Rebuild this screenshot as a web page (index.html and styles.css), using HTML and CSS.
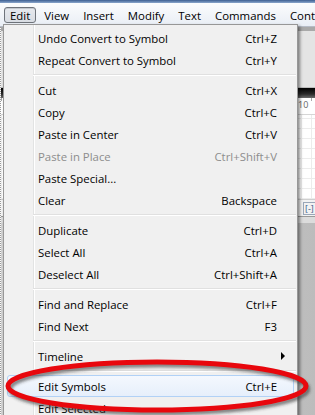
FILE: index.html
```html
<!DOCTYPE html>
<html lang="en">
<head>
  <meta charset="UTF-8">
  <title>Edit Menu</title>
  <link rel="stylesheet" href="styles.css">
</head>
<body>
  <div class="app">
    <div class="titlebar"></div>
    <nav class="menubar">
      <span class="menu-title active">Edit</span>
      <span class="menu-title">View</span>
      <span class="menu-title">Insert</span>
      <span class="menu-title">Modify</span>
      <span class="menu-title">Text</span>
      <span class="menu-title">Commands</span>
      <span class="menu-title">Cont</span>
    </nav>

    <div class="workspace">
      <div class="left-strip"></div>
      <div class="main">
        <div class="toolbar"></div>
        <div class="panel"></div>
        <div class="timeline-bar"></div>
        <div class="ruler"><span class="ruler-num">10</span></div>
        <div class="stage"></div>
        <div class="stage-footer"><span class="zoom-box">[-]</span></div>
        <div class="gray-area"></div>
      </div>
    </div>

    <ul class="dropdown">
      <li class="item"><span>Undo Convert to Symbol</span><span class="key">Ctrl+Z</span></li>
      <li class="item"><span>Repeat Convert to Symbol</span><span class="key">Ctrl+Y</span></li>
      <li class="sep"></li>
      <li class="item"><span>Cut</span><span class="key">Ctrl+X</span></li>
      <li class="item"><span>Copy</span><span class="key">Ctrl+C</span></li>
      <li class="item"><span>Paste in Center</span><span class="key">Ctrl+V</span></li>
      <li class="item disabled"><span>Paste in Place</span><span class="key">Ctrl+Shift+V</span></li>
      <li class="item"><span>Paste Special...</span><span class="key"></span></li>
      <li class="item"><span>Clear</span><span class="key">Backspace</span></li>
      <li class="sep"></li>
      <li class="item"><span>Duplicate</span><span class="key">Ctrl+D</span></li>
      <li class="item"><span>Select All</span><span class="key">Ctrl+A</span></li>
      <li class="item"><span>Deselect All</span><span class="key">Ctrl+Shift+A</span></li>
      <li class="sep"></li>
      <li class="item"><span>Find and Replace</span><span class="key">Ctrl+F</span></li>
      <li class="item"><span>Find Next</span><span class="key">F3</span></li>
      <li class="sep"></li>
      <li class="item"><span>Timeline</span><span class="arrow"></span></li>
      <li class="sep"></li>
      <li class="item hover"><span>Edit Symbols</span><span class="key">Ctrl+E</span></li>
      <li class="item"><span>Edit Selected</span><span class="key"></span></li>
    </ul>

    <svg class="annotation" width="315" height="415" viewBox="0 0 315 415">
      <defs>
        <filter id="soft" x="-10%" y="-50%" width="120%" height="200%">
          <feGaussianBlur stdDeviation="1.8"/>
        </filter>
      </defs>
      <ellipse cx="159" cy="389" rx="149" ry="24" fill="none" stroke="rgba(50,50,50,0.6)" stroke-width="4.5" filter="url(#soft)"/>
      <ellipse cx="157" cy="386" rx="149" ry="24" fill="none" stroke="#e8070d" stroke-width="5"/>
    </svg>
  </div>
</body>
</html>
```

FILE: styles.css
```css
body {
  margin: 0;
  padding: 0;
  font-family: 'Open Sans', 'Liberation Sans', sans-serif;
  font-size: 11.4px;
  color: #000;
}

.app {
  position: relative;
  width: 315px;
  height: 415px;
  overflow: hidden;
  background: #c9c9c9;
}

.titlebar {
  height: 3px;
  background: linear-gradient(#3d5f91, #8aa6cc);
}

.menubar {
  height: 23px;
  display: flex;
  align-items: center;
  gap: 2px;
  padding-left: 4px;
  overflow: hidden;
  background: linear-gradient(#fbfcfd, #e9eef5);
  border-bottom: 1px solid #b6bcc6;
  white-space: nowrap;
}

.menu-title {
  padding: 0 5px;
  height: 16px;
  line-height: 15px;
  border: 1px solid transparent;
  border-radius: 3px;
  box-sizing: border-box;
}

.menu-title.active {
  border-color: #6f747b;
  background: linear-gradient(#e6e9ee, #d9dde3);
  box-shadow: inset 0 1px 0 #c4c8ce;
}

.workspace {
  display: flex;
  height: 391px;
}

.left-strip {
  width: 3px;
  background: #fbfbfb;
  border-right: 1px dotted #9a9a9a;
  box-sizing: border-box;
}

.main {
  flex: 1;
  display: flex;
  flex-direction: column;
}

.toolbar {
  height: 4px;
  background: #a9a9a9;
}

.panel {
  height: 57px;
  background: #e4e4e4;
  border-bottom: 1px solid #bdbdbd;
  box-sizing: border-box;
}

.timeline-bar {
  height: 10px;
  background: linear-gradient(#000, #2a2a2a 60%, #6a6a6a);
}

.ruler {
  height: 17px;
  background: #fff;
  border-bottom: 1px solid #d6d6d6;
  box-sizing: border-box;
  padding-left: 297px;
  font-size: 9px;
  color: #666;
  line-height: 14px;
  background-image: repeating-linear-gradient(90deg, #aaa 0 1px, transparent 1px 5px);
  background-size: 100% 3px;
  background-repeat: no-repeat;
}

.ruler-num {
  background: #fff;
}

.stage {
  height: 84px;
  background-color: #fff;
  background-image:
    repeating-linear-gradient(90deg, #ececec 0 1px, transparent 1px 10px),
    repeating-linear-gradient(0deg, #ececec 0 1px, transparent 1px 10px);
}

.stage-footer {
  height: 18px;
  background: #f2f2f2;
  border-top: 1px solid #cfcfcf;
  border-bottom: 1px solid #9a9a9a;
  box-sizing: border-box;
  padding-left: 302px;
  display: flex;
  align-items: center;
}

.zoom-box {
  font-size: 9px;
  color: #3a5a8a;
  border: 1px solid #9aa7b8;
  padding: 0 1px;
  line-height: 11px;
}

.gray-area {
  flex: 1;
  background: linear-gradient(90deg, #d2d2d2, #bcbcbc);
  border-top: 6px solid #dcdcdc;
}

/* dropdown */

.dropdown {
  position: absolute;
  left: 3px;
  top: 24px;
  width: 295px;
  height: 400px;
  margin: 0;
  padding: 2px 0 0;
  list-style: none;
  box-sizing: border-box;
  border: 1px solid #979797;
  background:
    linear-gradient(90deg, #f1f1f1 0 29px, #e2e3e3 29px 30px, #fff 30px 31px, #f0f0f0 31px);
  box-shadow: 2px 2px 3px rgba(0, 0, 0, 0.45);
}

.item {
  display: flex;
  justify-content: space-between;
  align-items: center;
  height: 22px;
  margin: 0 3px;
  padding: 0 16px 0 30px;
  border: 1px solid transparent;
  border-radius: 3px;
  box-sizing: border-box;
  white-space: nowrap;
}

.item.disabled {
  color: #8d8d8d;
}

.item.hover {
  border-color: #b1d1f6;
  background: linear-gradient(#f4f8fe, #e6effb);
}

.arrow {
  width: 0;
  height: 0;
  margin-right: -8px;
  border-top: 4px solid transparent;
  border-bottom: 4px solid transparent;
  border-left: 4px solid #000;
}

.sep {
  height: 8px;
  margin: 0 1px 0 29px;
  background: linear-gradient(transparent 3px, #e0e0e0 3px 4px, #fff 4px 5px, transparent 5px);
}

.annotation {
  position: absolute;
  left: 0;
  top: 0;
  pointer-events: none;
}
```
